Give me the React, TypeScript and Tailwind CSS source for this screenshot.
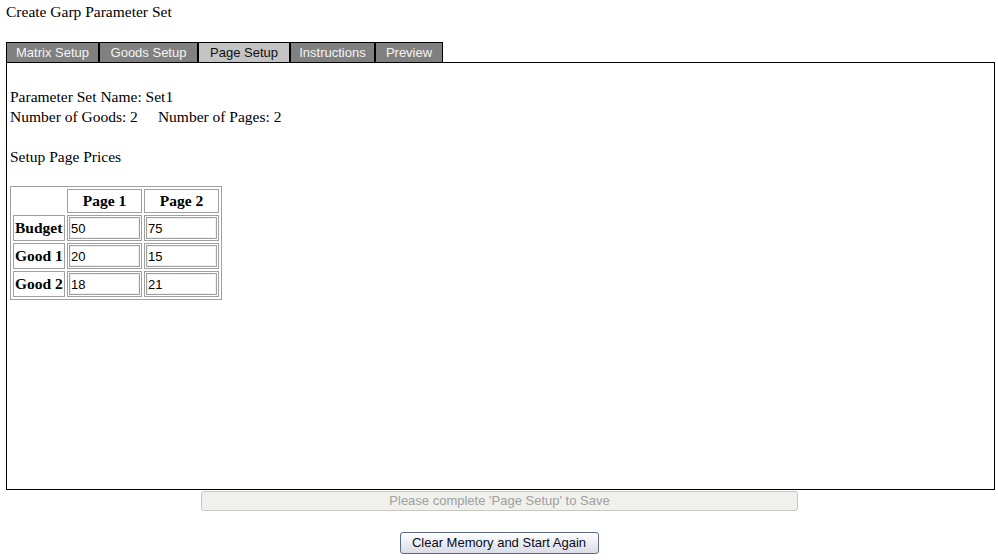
const TABS = [
  { label: "Matrix Setup", width: "w-[93px]", active: false },
  { label: "Goods Setup", width: "w-[99px]", active: false },
  { label: "Page Setup", width: "w-[92px]", active: true },
  { label: "Instructions", width: "w-[85px]", active: false },
  { label: "Preview", width: "w-[68px]", active: false },
];

const ROWS = [
  { name: "Budget", values: ["50", "75"] },
  { name: "Good 1", values: ["20", "15"] },
  { name: "Good 2", values: ["18", "21"] },
];

const serif = "font-['Liberation_Serif','Times_New_Roman',serif]";
const sans = "font-['Liberation_Sans',Arial,sans-serif]";

export default function App() {
  return (
    <div className={`min-h-[560px] bg-white text-black ${serif} text-[15.5px] leading-[20px]`}>
      <div className="pl-[6px] pt-[2px]">Create Garp Parameter Set</div>

      <div className="mt-[20px] flex pl-[6px]">
        {TABS.map((tab) => (
          <div
            key={tab.label}
            className={`${tab.width} h-[20px] border border-b-0 border-black pt-[2px] text-center ${sans} text-[13px] leading-[15px] ${
              tab.active ? "bg-[#c4c4c4] text-[#111]" : "bg-[#808080] text-[#f4f4f4]"
            }`}
          >
            {tab.label}
          </div>
        ))}
      </div>

      <div className="ml-[6px] h-[428px] w-[989px] border border-black pl-[3px] pt-[24px]">
        <div>Parameter Set Name: Set1</div>
        <div>
          Number of Goods: 2<span className="ml-[20px]">Number of Pages: 2</span>
        </div>
        <div className="mt-[20px]">Setup Page Prices</div>

        <table className="mt-[19px] border-separate border-spacing-[2px] border border-[#a0a0a0]">
          <tbody>
            <tr>
              <td className="h-[24px] w-[52px]" />
              <th className="h-[24px] w-[75px] border border-[#a0a0a0] p-0 text-center font-bold">Page 1</th>
              <th className="h-[24px] w-[75px] border border-[#a0a0a0] p-0 text-center font-bold">Page 2</th>
            </tr>
            {ROWS.map((row) => (
              <tr key={row.name}>
                <th className="h-[26px] w-[52px] border border-[#a0a0a0] px-[1px] py-0 text-left font-bold whitespace-nowrap">
                  {row.name}
                </th>
                {row.values.map((v, i) => (
                  <td key={i} className="h-[26px] w-[75px] border border-[#a0a0a0] p-[1px]">
                    <input
                      defaultValue={v}
                      className={`block h-[22px] w-[71px] border border-[#a0a0a0] px-[1px] ${sans} text-[13px] text-black shadow-[inset_0_0_0_1px_#f0f0f0] outline-none`}
                    />
                  </td>
                ))}
              </tr>
            ))}
          </tbody>
        </table>
      </div>

      <div className="mt-[1px] flex justify-center">
        <button
          disabled
          className={`ml-[1px] h-[20px] w-[597px] rounded-[3px] border border-[#c8c8c0] bg-[#f0f0ec] ${sans} text-[13px] leading-[18px] text-[#a0a0a0]`}
        >
          Please complete 'Page Setup' to Save
        </button>
      </div>

      <div className="mt-[21px] flex justify-center">
        <button
          className={`h-[22px] w-[199px] rounded-[3px] border border-[#5d6b88] bg-gradient-to-b from-white to-[#d9dce6] ${sans} text-[13px] leading-[18px] text-[#0a0a1a]`}
        >
          Clear Memory and Start Again
        </button>
      </div>
    </div>
  );
}
